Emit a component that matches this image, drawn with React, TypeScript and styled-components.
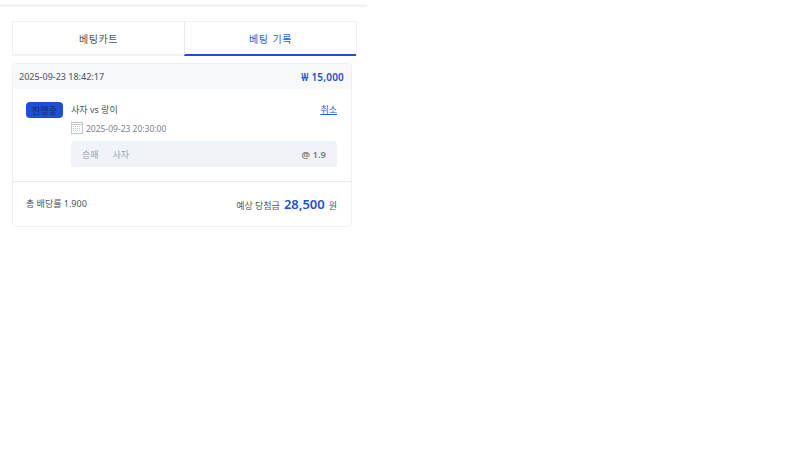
import styled, { createGlobalStyle } from 'styled-components';

const GlobalStyle = createGlobalStyle`
  html, body {
    margin: 0;
    padding: 0;
    background: #fff;
    font-family: "Noto Sans", "Noto Sans CJK KR", sans-serif;
  }
  * { box-sizing: border-box; }
`;

const Panel = styled.div`
  width: 367px;
`;

const TopBar = styled.div`
  height: 7px;
  border-bottom: 3px solid #f4f4f5;
`;

const Content = styled.div`
  padding: 14px 10px 0 12px;
`;

/* tabs */
const Tabs = styled.div`
  display: flex;
  height: 35px;
  width: 345px;
  border: 1px solid #f0f1f5;
  border-bottom: none;
`;

const Tab = styled.div<{ $active?: boolean }>`
  flex: 1;
  display: flex;
  align-items: center;
  justify-content: center;
  font-size: 10px;
  letter-spacing: 0.5px;
  word-spacing: 1px;
  color: ${({ $active }) => ($active ? '#2b5bdc' : '#4b5563')};
  border-left: ${({ $active }) => ($active ? '1px solid #e5e9f5' : 'none')};
  border-bottom: 2px solid ${({ $active }) => ($active ? '#1d4ed8' : '#f0f1f5')};
`;

/* card */
const Card = styled.div`
  width: 340px;
  margin-top: 7px;
  border: 1px solid #eff0f5;
  border-radius: 4px;
  overflow: hidden;
`;

const CardHeader = styled.div`
  display: flex;
  align-items: center;
  justify-content: space-between;
  height: 25px;
  padding: 0 7px 0 6px;
  background: #f8f9fb;
`;

const PlacedAt = styled.span`
  font-size: 9px;
  font-weight: 500;
  color: #5b6470;
`;

const Stake = styled.span`
  font-size: 10px;
  font-weight: 600;
  letter-spacing: 0.2px;
  color: #2150d4;
`;

const BetRow = styled.div`
  display: flex;
  align-items: flex-start;
  gap: 8px;
  padding: 13px 14px 14px 13px;
`;

const StatusBadge = styled.span`
  flex: none;
  width: 37px;
  height: 16px;
  display: flex;
  align-items: center;
  justify-content: center;
  border-radius: 4px;
  background: #1d4ed8;
  color: #1e2a5a;
  font-size: 9px;
`;

const BetBody = styled.div`
  flex: 1;
  min-width: 0;
`;

const MatchRow = styled.div`
  display: flex;
  align-items: center;
  justify-content: space-between;
  height: 14px;
`;

const MatchName = styled.span`
  font-size: 9px;
  color: #4b5563;
`;

const CancelLink = styled.a`
  font-size: 9px;
  color: #2b5bdc;
  text-decoration: underline;
`;

const TimeRow = styled.div`
  display: flex;
  align-items: center;
  gap: 3px;
  height: 14px;
  margin-top: 5px;
  font-size: 8.5px;
  color: #7b8390;
`;

const Pick = styled.div`
  display: flex;
  align-items: center;
  height: 26px;
  margin-top: 6px;
  padding: 0 11px;
  border-radius: 4px;
  background: #f0f3f8;
  font-size: 9px;
  color: #9ca3af;
`;

const PickName = styled.span`
  margin-left: 14px;
`;

const PickOdds = styled.span`
  margin-left: auto;
  font-weight: 600;
  font-size: 9.5px;
  color: #777b82;
`;

const Summary = styled.div`
  display: flex;
  align-items: center;
  justify-content: space-between;
  height: 45px;
  padding: 0 14px 1px 13px;
  border-top: 1px solid #e8eaf0;
  font-size: 9px;
  color: #4b5563;
`;

const Payout = styled.div`
  display: flex;
  align-items: baseline;
  gap: 4px;
`;

const PayoutAmount = styled.strong`
  font-size: 13px;
  font-weight: 600;
  color: #2150d4;
`;

const CalendarIcon = () => (
  <svg width="12" height="12" viewBox="0 0 12 12" fill="none" stroke="#c4c8cf" strokeWidth="1">
    <rect x="0.5" y="0.5" width="11" height="11" />
    <path d="M0.5 2.5H11.5" />
    <path d="M2 4.5H10M2 6.5H10M2 8.5H10" strokeDasharray="1 1" />
  </svg>
);

export default function App() {
  return (
    <>
      <GlobalStyle />
      <Panel>
        <TopBar />
        <Content>
          <Tabs>
            <Tab>베팅카트</Tab>
            <Tab $active>베팅 기록</Tab>
          </Tabs>
          <Card>
            <CardHeader>
              <PlacedAt>2025-09-23 18:42:17</PlacedAt>
              <Stake>₩ 15,000</Stake>
            </CardHeader>
            <BetRow>
              <StatusBadge>진행중</StatusBadge>
              <BetBody>
                <MatchRow>
                  <MatchName>사자 vs 랑이</MatchName>
                  <CancelLink>취소</CancelLink>
                </MatchRow>
                <TimeRow>
                  <CalendarIcon />
                  2025-09-23 20:30:00
                </TimeRow>
                <Pick>
                  승패
                  <PickName>사자</PickName>
                  <PickOdds>@ 1.9</PickOdds>
                </Pick>
              </BetBody>
            </BetRow>
            <Summary>
              <span>총 배당률 1.900</span>
              <Payout>
                예상 당첨금 <PayoutAmount>28,500</PayoutAmount> 원
              </Payout>
            </Summary>
          </Card>
        </Content>
      </Panel>
    </>
  );
}
